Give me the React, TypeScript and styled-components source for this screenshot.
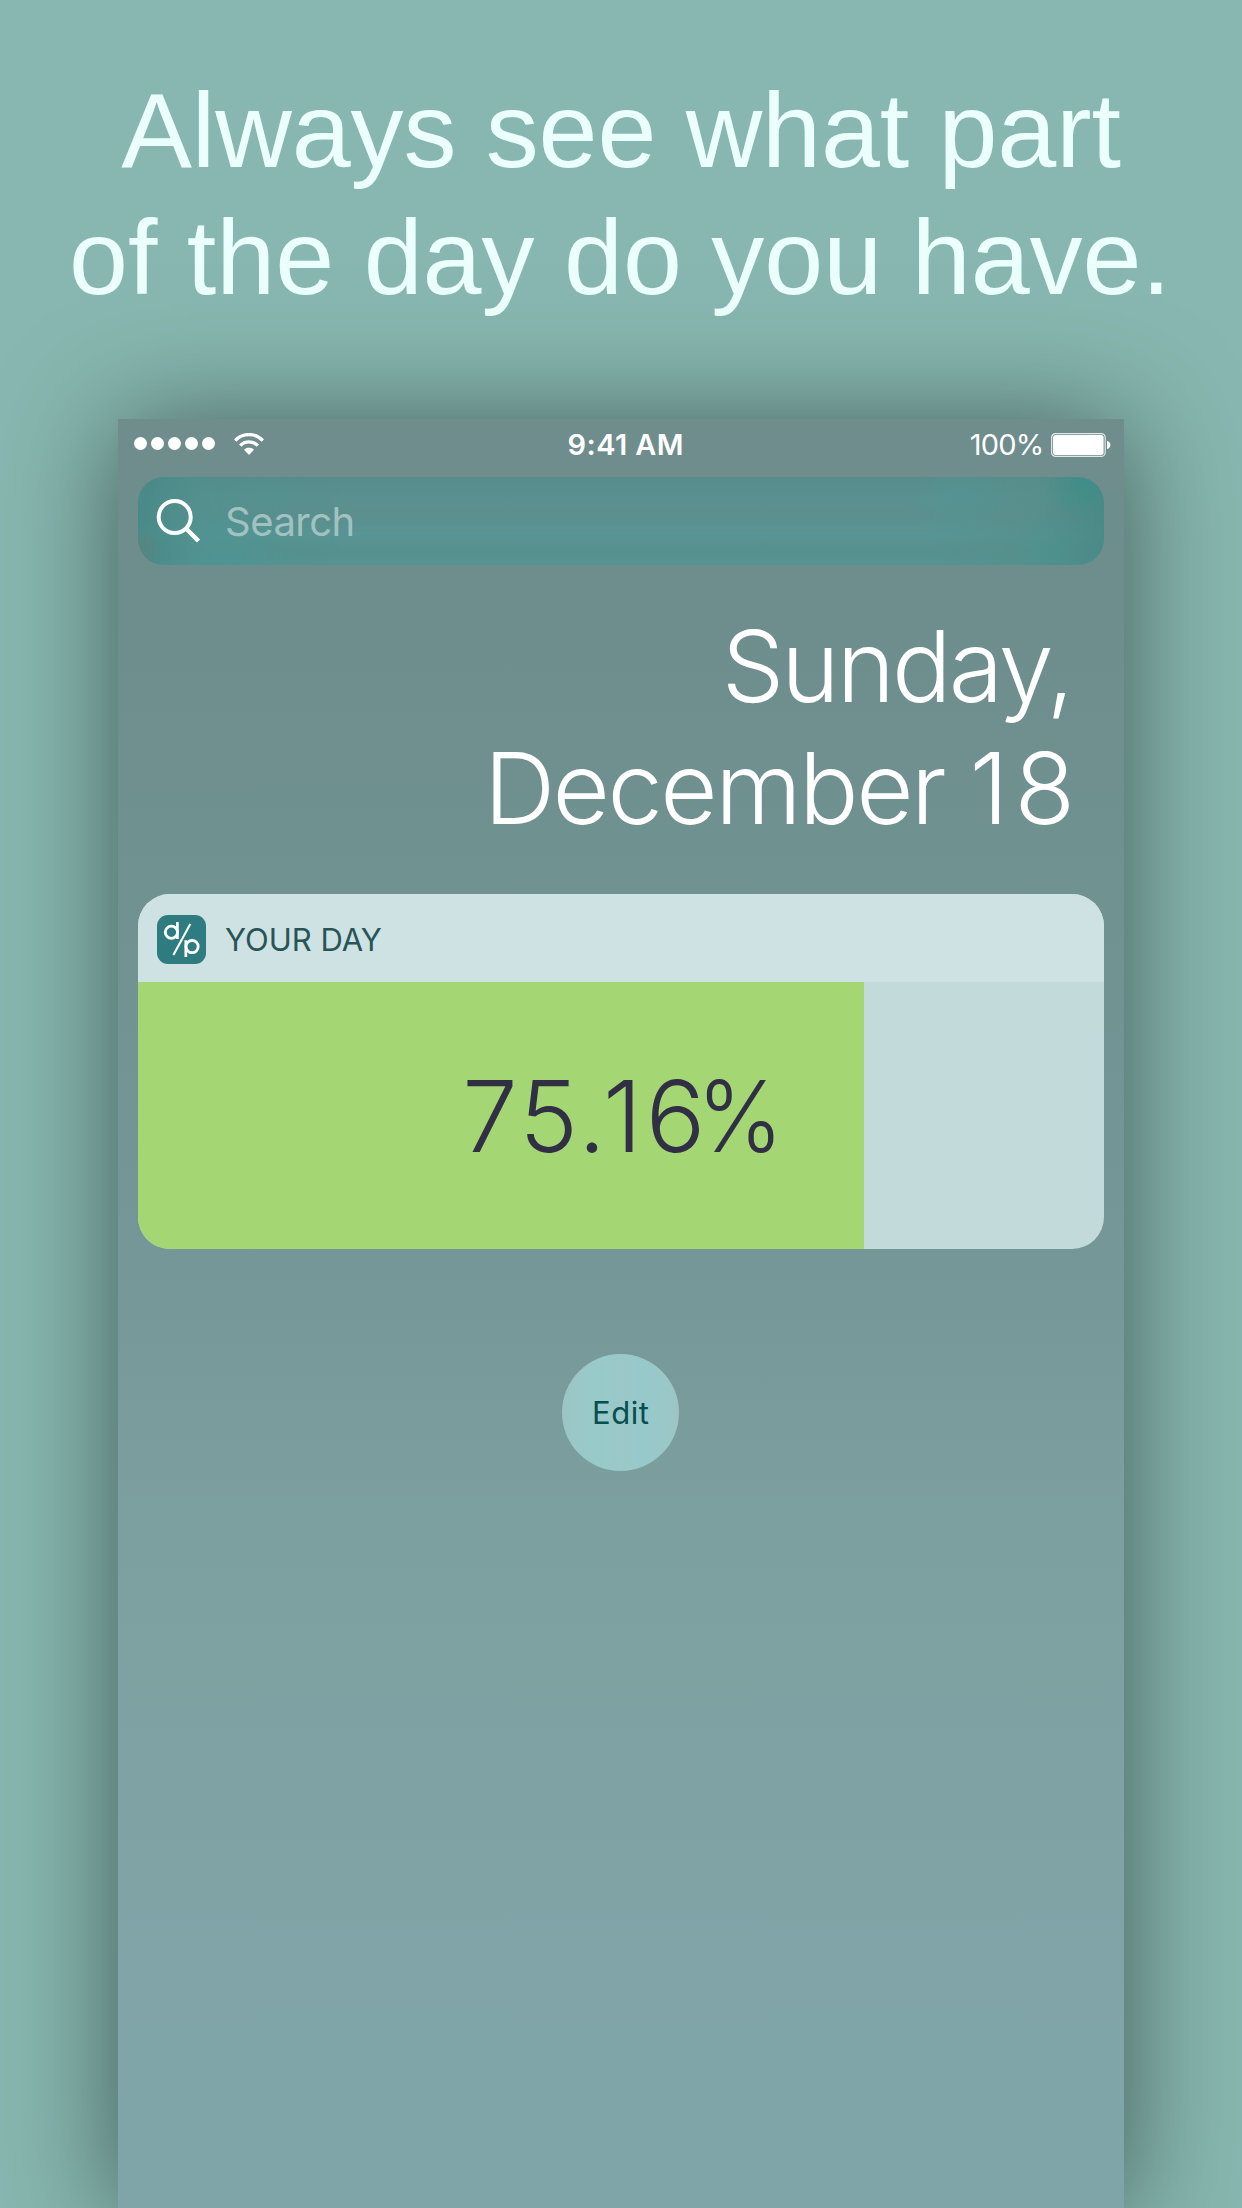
import React from "react";
import styled, { createGlobalStyle } from "styled-components";

const Global = createGlobalStyle`
  *, *::before, *::after { box-sizing: border-box; }
  html, body { margin: 0; padding: 0; }
  body { background: #87b7b0; overflow: hidden; }
`;

const Page = styled.main`
  width: 1242px;
  height: 2208px;
  overflow: hidden;
  display: flex;
  flex-direction: column;
  align-items: center;
  background: #87b7b0;
  padding-top: 67px;
`;

const Headline = styled.h1`
  margin: 0 0 98px;
  font: 400 106px/127px "Liberation Sans", Arial, sans-serif;
  color: #ebfffc;
  text-align: center;
  white-space: nowrap;
`;

const HeadlineRow = styled.span<{ $inset?: number; $tracking?: number }>`
  display: block;
  padding-right: ${(p) => p.$inset ?? 0}px;
  letter-spacing: ${(p) => p.$tracking ?? 0}px;
`;

const Phone = styled.section`
  width: 1006px;
  height: 1789px;
  flex: none;
  display: flex;
  flex-direction: column;
  padding: 0 20px 0 19.5px;
  font-family: Inter, sans-serif;
  background: linear-gradient(
    #6e8d8c 0,
    #6e8e8d 200px,
    #6f918f 420px,
    #769798 850px,
    #7c9f9f 1100px,
    #80a4a6 1450px,
    #80a5a8 100%
  );
  box-shadow: 0 7px 108px rgba(0, 0, 0, 0.5);
`;

const StatusBar = styled.header`
  display: grid;
  grid-template-columns: 1fr auto 1fr;
  align-items: center;
  height: 51px;
  margin: 0 -6.5px 7px -3.5px;
  color: #fff;
  font-size: 29px;
  line-height: 51px;
`;

const Signal = styled.div`
  display: flex;
  align-items: center;
  gap: 4px;
  height: 49px;
  margin-bottom: 2px;
  svg { margin-left: 15px; }
`;

const Dot = styled.span`
  width: 13px;
  height: 13px;
  border-radius: 50%;
  background: #fff;
`;

const Clock = styled.time`
  padding-left: 7px;
  font-weight: 560;
  letter-spacing: 0.4px;
`;

const Power = styled.div`
  display: flex;
  align-items: center;
  justify-content: flex-end;
  gap: 7px;
  letter-spacing: -0.8px;
`;

const SearchBar = styled.div`
  display: flex;
  align-items: center;
  gap: 24px;
  height: 88px;
  padding-left: 18.5px;
  border-radius: 26px;
  background:
    radial-gradient(circle at 98% 8%, rgba(58, 143, 135, 0.7), transparent 36px),
    radial-gradient(circle at 94% 84%, rgba(70, 148, 144, 0.5), transparent 36px),
    radial-gradient(circle at 85% 24%, rgba(80, 150, 150, 0.5), transparent 50px),
    radial-gradient(circle at 0.5% 80%, rgba(96, 130, 124, 0.7), transparent 20px),
    radial-gradient(circle at 9% 90%, rgba(76, 152, 150, 0.5), transparent 60px),
    linear-gradient(90deg, rgba(60, 134, 131, 0.6), rgba(76, 143, 141, 0.5) 6%, transparent 22%, transparent 82%, rgba(86, 142, 138, 0.6) 93%, rgba(66, 134, 131, 0.65)),
    linear-gradient(#578c8b 0, #5a9190 25%, #5c8f8e 45%, #589594 65%, #57908e 82%, #569391 100%);
`;

const Placeholder = styled.span`
  font-size: 40px;
  color: #a2c2c2;
  letter-spacing: -0.5px;
`;

const DateText = styled.h2`
  margin: 41px 30px 45px 0;
  font-weight: 300;
  font-size: 99px;
  line-height: 121.5px;
  text-align: right;
  color: #fff;
`;

const DateRow = styled.span<{ $tracking: number; $inset?: number }>`
  display: block;
  padding-right: ${(p) => p.$inset ?? 0}px;
  letter-spacing: ${(p) => p.$tracking}px;
`;

const DayNumber = styled.span`
  margin-right: -7px;
  letter-spacing: 6px;
`;

const Widget = styled.article`
  height: 355px;
  flex: none;
  border-radius: 32px;
  overflow: hidden;
  background: #c3dadb;
`;

const WidgetHeader = styled.div`
  display: flex;
  align-items: center;
  gap: 19px;
  height: 87.5px;
  padding: 3px 0 0 19.5px;
  background: #cee1e3;
`;

const WidgetTitle = styled.h3`
  margin: 0;
  font-weight: 400;
  font-size: 31px;
  color: #275556;
`;

const Progress = styled.div<{ $value: number }>`
  display: flex;
  align-items: center;
  justify-content: center;
  height: 267.5px;
  background: linear-gradient(90deg, #a4d774 ${(p) => p.$value}%, transparent ${(p) => p.$value}%);
`;

const Percent = styled.span`
  font-weight: 300;
  font-size: 99px;
  line-height: 120px;
  color: #302f44;
  padding-top: 1px;
`;

const Tracked = styled.span<{ $by: number }>`
  letter-spacing: ${(p) => p.$by}px;
`;

const PercentSign = styled.span`
  display: inline-block;
  margin-right: -11px;
  transform: scaleX(0.93);
  transform-origin: left;
`;

const EditButton = styled.button`
  align-self: center;
  width: 117px;
  height: 117px;
  flex: none;
  margin: 104.5px 0 0 0;
  padding: 0;
  border: 0;
  border-radius: 50%;
  background: linear-gradient(90deg, #9cc5c5, #98caca 30%, #9bc8c9 50%, #97c9ca 70%, #9cc6c5);
  color: #064e50;
  font: 400 31px Inter, sans-serif;
  letter-spacing: 0.5px;
`;

const WifiIcon = () => (
  <svg width="30" height="22" viewBox="0 0 30 22">
    <g fill="none" stroke="#fff" strokeWidth="3.4">
      <path d="M1.2 7.6C8.6-.4 21.4-.4 28.8 7.6" />
      <path d="M6.2 12.7C11 7.6 19 7.6 23.8 12.7" />
    </g>
    <path d="M15 22 10 16.8C12.6 14.2 17.4 14.2 20 16.8Z" fill="#fff" />
  </svg>
);

const BatteryIcon = () => (
  <svg width="60" height="24" viewBox="0 0 60 24">
    <rect x="0.6" y="0.6" width="53.6" height="22.8" rx="4" fill="none" stroke="#fff" strokeOpacity=".8" strokeWidth="1.2" />
    <rect x="2" y="2" width="50.6" height="20" rx="2.5" fill="#fff" />
    <path d="M56 8C60.5 8.5 60.5 15.5 56 16Z" fill="#fff" />
  </svg>
);

const SearchIcon = () => (
  <svg width="45" height="46" viewBox="0 0 45 46">
    <g fill="none" stroke="#fff" strokeWidth="4">
      <circle cx="18.7" cy="19" r="16" />
      <path d="M30 30.5 42.5 43" strokeWidth="4.4" />
    </g>
  </svg>
);

const AppIcon = () => (
  <svg width="49" height="49" viewBox="0 0 49 49">
    <rect width="49" height="49" rx="11" fill="#2e7b80" />
    <g fill="none" stroke="#fff">
      <circle cx="14.4" cy="17.3" r="6.1" strokeWidth="2.8" />
      <path d="M20.4 7V24" strokeWidth="2.7" />
      <circle cx="35.1" cy="31.6" r="6.1" strokeWidth="2.8" />
      <path d="M28.8 25.2V42" strokeWidth="2.7" />
      <path d="M33.3 9 16.4 40" strokeWidth="2.1" />
    </g>
  </svg>
);

export default function App() {
  return (
    <>
      <Global />
      <Page>
        <Headline>
          <HeadlineRow $tracking={-0.1}>Always see what part</HeadlineRow>
          <HeadlineRow $inset={2}>of the day do you have.</HeadlineRow>
        </Headline>
        <Phone>
          <StatusBar>
            <Signal>
              {[0, 1, 2, 3, 4].map((i) => (
                <Dot key={i} />
              ))}
              <WifiIcon />
            </Signal>
            <Clock>9:41 AM</Clock>
            <Power>
              <span>100%</span>
              <BatteryIcon />
            </Power>
          </StatusBar>
          <SearchBar>
            <SearchIcon />
            <Placeholder>Search</Placeholder>
          </SearchBar>
          <DateText>
            <DateRow $tracking={-2.9} $inset={2.5}>Sunday,</DateRow>
            <DateRow $tracking={-2.5}>
              December <DayNumber>18</DayNumber>
            </DateRow>
          </DateText>
          <Widget>
            <WidgetHeader>
              <AppIcon />
              <WidgetTitle>YOUR DAY</WidgetTitle>
            </WidgetHeader>
            <Progress $value={75.16}>
              <Percent>
                <Tracked $by={1.5}>7</Tracked>
                <Tracked $by={0}>5</Tracked>
                <Tracked $by={-3}>.</Tracked>
                <Tracked $by={4}>1</Tracked>
                <Tracked $by={-8}>6</Tracked>
                <PercentSign>%</PercentSign>
              </Percent>
            </Progress>
          </Widget>
          <EditButton>Edit</EditButton>
        </Phone>
      </Page>
    </>
  );
}
